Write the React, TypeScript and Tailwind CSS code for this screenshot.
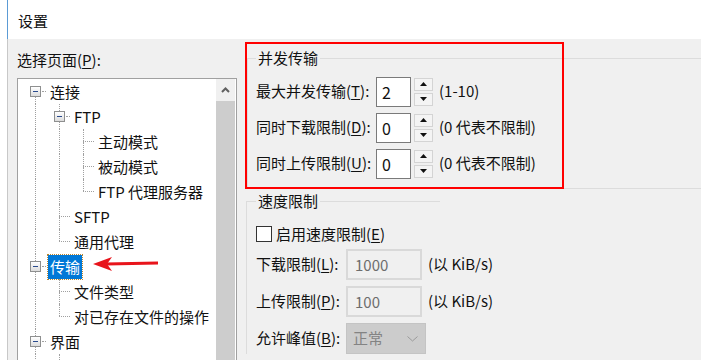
import React from "react";

type Cell = "line" | "tee" | "elbow" | "box" | "boxTop" | "blank";

interface TreeRow {
  cells: Cell[];
  text: string;
  selected?: boolean;
}

const treeRows: TreeRow[] = [
  { cells: ["box"], text: "连接" },
  { cells: ["line", "boxTop"], text: "FTP" },
  { cells: ["line", "line", "tee"], text: "主动模式" },
  { cells: ["line", "line", "tee"], text: "被动模式" },
  { cells: ["line", "line", "elbow"], text: "FTP 代理服务器" },
  { cells: ["line", "tee"], text: "SFTP" },
  { cells: ["line", "elbow"], text: "通用代理" },
  { cells: ["boxTop"], text: "传输", selected: true },
  { cells: ["line", "tee"], text: "文件类型" },
  { cells: ["line", "elbow"], text: "对已存在文件的操作" },
  { cells: ["boxTop"], text: "界面" },
  { cells: ["line", "tee"], text: "" },
];

const dot = "border-dotted border-[#a0a0a0]";

function TreeCell({ kind }: { kind: Cell }) {
  if (kind === "blank") return <div className="w-[24px] h-[25px] shrink-0" />;
  if (kind === "line") {
    return (
      <div className="w-[24px] h-[25px] shrink-0 flex">
        <div className="w-[11px]" />
        <div className={`h-full border-l ${dot}`} />
      </div>
    );
  }
  if (kind === "tee" || kind === "elbow") {
    return (
      <div className="w-[24px] h-[25px] shrink-0 flex flex-col">
        <div className="h-[12px] flex">
          <div className="w-[11px]" />
          <div className={`h-full border-l ${dot}`} />
        </div>
        <div className="flex">
          <div className="w-[11px]" />
          <div className={`flex-1 border-t ${dot} mr-[2px]`} />
        </div>
        <div className="flex-1 flex">
          <div className="w-[11px]" />
          {kind === "tee" && <div className={`h-full border-l ${dot}`} />}
        </div>
      </div>
    );
  }
  return (
    <div className="w-[24px] h-[25px] shrink-0 flex flex-col">
      <div className="h-[7px] flex">
        <div className="w-[11px]" />
        {kind === "boxTop" && <div className={`h-full border-l ${dot}`} />}
      </div>
      <div className="h-[11px] flex items-center">
        <div className="w-[6px]" />
        <div className="w-[11px] h-[11px] border border-[#8e8f8f] bg-gradient-to-b from-white to-[#dcdcdc] flex items-center justify-center">
          <div className="w-[5px] h-[1px] bg-[#2a4b8d]" />
        </div>
        <div className={`flex-1 border-t ${dot} mx-[1px] mr-[2px]`} />
      </div>
      <div className="flex-1 flex">
        <div className="w-[11px]" />
        <div className={`h-full border-l ${dot}`} />
      </div>
    </div>
  );
}

function Spinner() {
  return (
    <div className="ml-[3px] flex flex-col gap-[2px]">
      <div className="w-[19px] h-[13px] border border-[#d4d4d4] bg-[#f4f4f4] flex items-center justify-center">
        <svg width="7" height="4" viewBox="0 0 7 4">
          <polygon points="3.5,0 7,4 0,4" fill="#111" />
        </svg>
      </div>
      <div className="w-[19px] h-[13px] border border-[#d4d4d4] bg-[#f4f4f4] flex items-center justify-center">
        <svg width="7" height="4" viewBox="0 0 7 4">
          <polygon points="0,0 7,0 3.5,4" fill="#111" />
        </svg>
      </div>
    </div>
  );
}

function Key({ k }: { k: string }) {
  return <span className="underline underline-offset-2">{k}</span>;
}

export default function App() {
  const concurrent = [
    { pre: "最大并发传输(", k: "T", value: "2", hint: "(1-10)" },
    { pre: "同时下载限制(", k: "D", value: "0", hint: "(0 代表不限制)" },
    { pre: "同时上传限制(", k: "U", value: "0", hint: "(0 代表不限制)" },
  ];

  return (
    <div className="relative w-[701px] h-[360px] overflow-hidden bg-white flex font-['Noto_Sans_CJK_SC',sans-serif] text-[15px] text-[#111]">
      <div className="w-[7px] shrink-0" />
      <div className="w-px shrink-0 flex flex-col">
        <div className="h-[39px] bg-[#5b9bd5]" />
        <div className="flex-1 bg-[#c8c8c8]" />
      </div>

      <div className="flex-1 flex flex-col min-w-0">
        <div className="h-[39px] shrink-0 pl-[10px] pt-[3px] flex items-center leading-[20px]">设置</div>

        <div className="flex-1 bg-[#f0f0f0] flex">
          {/* left: page tree */}
          <div className="w-[230px] shrink-0 pl-[9px] pt-[11px] flex flex-col">
            <div className="leading-[20px] whitespace-nowrap">
              选择页面(<Key k="P" />):
            </div>
            <div className="mt-[8px] w-[220px] h-[300px] shrink-0 border border-[#a0a0a0] bg-white flex">
              <div className="flex-1 pl-[6px] flex flex-col">
                {treeRows.map((row, i) => (
                  <div key={i} className="h-[25px] flex items-center whitespace-nowrap">
                    {row.cells.map((c, j) => (
                      <TreeCell key={j} kind={c} />
                    ))}
                    {row.selected ? (
                      <span className="h-[24px] leading-[24px] px-[2px] bg-[#0078d7] text-white outline-1 outline-dotted outline-[#b9852e]">
                        {row.text}
                      </span>
                    ) : (
                      <span className="leading-[21px] px-[2px]">{row.text}</span>
                    )}
                  </div>
                ))}
              </div>
              <div className="w-[19px] mr-[1px] flex flex-col">
                <div className="h-[22px] bg-[#f0f0f0] flex items-center justify-center">
                  <svg width="9" height="6" viewBox="0 0 9 6">
                    <polyline points="1,5 4.5,1.5 8,5" fill="none" stroke="#606060" strokeWidth="2" />
                  </svg>
                </div>
                <div className="flex-1 bg-[#cdcdcd]" />
              </div>
            </div>
          </div>

          {/* right: settings */}
          <div className="flex-1 flex flex-col min-w-0">
            <div className="mt-[19px] ml-[9px] border-y border-l border-[#dcdcdc]">
              <div className="-mt-[11px] ml-[8px] w-fit bg-[#f0f0f0] px-[2px] leading-[20px]">并发传输</div>
              <div className="mt-[8px] pl-[8px] pb-[9px] flex flex-col gap-[5px]">
                {concurrent.map((r) => (
                  <div key={r.k} className="h-[31px] flex items-center whitespace-nowrap">
                    <div className="w-[120px]">
                      {r.pre}
                      <Key k={r.k} />
                      ):
                    </div>
                    <div className="w-[35px] h-[30px] border border-[#7a7a7a] bg-white pl-[5px] leading-[28px] text-[16px]">
                      {r.value}
                    </div>
                    <Spinner />
                    <div className="ml-[6px]">{r.hint}</div>
                  </div>
                ))}
              </div>
            </div>

            <div className="mt-[12px] ml-[8px] w-[194px] border-t border-l border-[#dcdcdc]">
              <div className="-mt-[11px] ml-[9px] w-fit bg-[#f0f0f0] px-[2px] leading-[20px]">速度限制</div>
              <div className="mt-[13px] pl-[9px] flex flex-col w-max">
                <div className="h-[20px] flex items-center whitespace-nowrap">
                  <div className="w-[16px] h-[16px] border border-[#333] bg-white" />
                  <div className="ml-[4px]">
                    启用速度限制(<Key k="E" />)
                  </div>
                </div>
                <div className="mt-[5px] flex flex-col gap-[6px]">
                  <div className="h-[31px] flex items-center whitespace-nowrap">
                    <div className="w-[90px]">
                      下载限制(<Key k="L" />):
                    </div>
                    <div className="w-[76px] h-[31px] border-2 border-[#d9d9d9] bg-[#f0f0f0] pl-[7px] leading-[27px] text-[#6d6d6d]">1000</div>
                    <div className="ml-[6px]">(以 KiB/s)</div>
                  </div>
                  <div className="h-[31px] flex items-center whitespace-nowrap">
                    <div className="w-[90px]">
                      上传限制(<Key k="P" />):
                    </div>
                    <div className="w-[76px] h-[31px] border-2 border-[#d9d9d9] bg-[#f0f0f0] pl-[7px] leading-[27px] text-[#6d6d6d]">100</div>
                    <div className="ml-[6px]">(以 KiB/s)</div>
                  </div>
                  <div className="h-[31px] flex items-center whitespace-nowrap">
                    <div className="w-[90px]">
                      允许峰值(<Key k="B" />):
                    </div>
                    <div className="w-[80px] h-[31px] border border-[#c4c4c4] bg-[#cccccc] pl-[6px] pr-[7px] flex items-center justify-between text-[#838383]">
                      <span>正常</span>
                      <svg width="11" height="6" viewBox="0 0 11 6">
                        <polyline points="0.5,0.5 5.5,5 10.5,0.5" fill="none" stroke="#9a9a9a" strokeWidth="1" />
                      </svg>
                    </div>
                  </div>
                </div>
              </div>
            </div>
          </div>
        </div>
      </div>

      {/* annotations */}
      <div className="absolute left-[245px] top-[42px] w-[319px] h-[147px] border-2 border-[#ff0000]" />
      <svg className="absolute left-[90px] top-[253px]" width="72" height="22" viewBox="0 0 72 22">
        <line x1="16" y1="11" x2="68" y2="10" stroke="#e8141b" strokeWidth="3" />
        <polygon points="3,11 22,4 17,11 22,18" fill="#e8141b" />
      </svg>
    </div>
  );
}
